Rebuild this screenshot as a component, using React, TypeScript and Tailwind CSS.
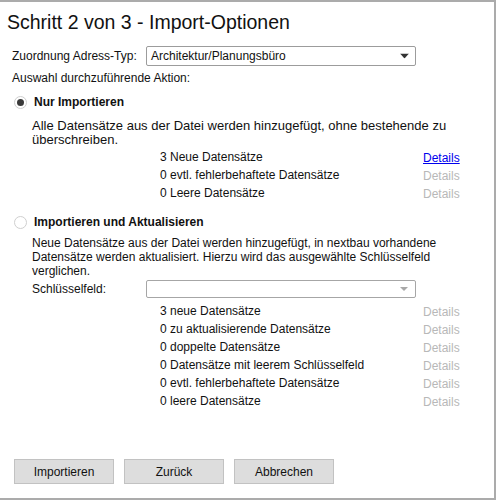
import React from "react";

type Row = { label: string; link?: boolean };

const importRows: Row[] = [
  { label: "3 Neue Datensätze", link: true },
  { label: "0 evtl. fehlerbehaftete Datensätze" },
  { label: "0 Leere Datensätze" },
];

const updateRows: Row[] = [
  { label: "3 neue Datensätze" },
  { label: "0 zu aktualisierende Datensätze" },
  { label: "0 doppelte Datensätze" },
  { label: "0 Datensätze mit leerem Schlüsselfeld" },
  { label: "0 evtl. fehlerbehaftete Datensätze" },
  { label: "0 leere Datensätze" },
];

function Radio({ checked }: { checked: boolean }) {
  return (
    <span className="flex h-[13px] w-[13px] shrink-0 items-center justify-center rounded-full border border-[#cfcfcf] bg-white">
      {checked && <span className="h-[7px] w-[7px] rounded-full bg-[#3a3a3a]" />}
    </span>
  );
}

function Caret({ muted }: { muted?: boolean }) {
  return muted ? (
    <svg width="8" height="4" viewBox="0 0 8 4" className="absolute right-[7px] top-1/2 -translate-y-1/2">
      <path d="M0 0h8L4 4z" fill="#a8a8a8" />
    </svg>
  ) : (
    <svg width="9" height="5" viewBox="0 0 9 5" className="absolute right-[6px] top-1/2 -translate-y-1/2">
      <path d="M0 0h9L4.5 5z" fill="#333" />
    </svg>
  );
}

function Select({ value, tall }: { value?: string; tall?: boolean }) {
  return (
    <div
      className={`relative flex w-[270px] items-center rounded-[2px] border bg-white pl-[4px] ${
        tall ? "h-[20px] border-[#9c9c9c]" : "h-[18px] border-[#a6a6a6]"
      }`}
    >
      <span className="leading-[14px]">{value}</span>
      <Caret muted={!value} />
    </div>
  );
}

function StatRows({ rows }: { rows: Row[] }) {
  return (
    <div className="pl-[160px]">
      {rows.map((r) => (
        <div key={r.label} className="flex h-[18px] leading-[18px]">
          <span className="w-[263px]">{r.label}</span>
          {r.link ? (
            <span className="pt-[1px] text-[#0000ee] underline">Details</span>
          ) : (
            <span className="pt-[1px] text-[#b8b8b8]">Details</span>
          )}
        </div>
      ))}
    </div>
  );
}

function Button({ children }: { children: React.ReactNode }) {
  return (
    <div className="flex h-[25px] w-[100px] items-center justify-center border border-[#c2c2c2] bg-[#dddddd]">
      {children}
    </div>
  );
}

export default function App() {
  return (
    <div
      className="flex h-[500px] w-[496px] flex-col border-t-2 border-r-2 border-b-2 border-[#ababab] bg-white text-[12px] text-[#111]"
      style={{ fontFamily: '"Liberation Sans", Arial, sans-serif' }}
    >
      <h1 className="pl-[7px] pt-[8px] text-[19.5px] leading-[24px]">Schritt 2 von 3 - Import-Optionen</h1>

      <div className="mt-[12px] flex h-[20px] items-center pl-[12px]">
        <span className="w-[134px]">Zuordnung Adress-Typ:</span>
        <Select value="Architektur/Planungsbüro" tall />
      </div>

      <div className="mt-[5px] pl-[12px] leading-[14px]">Auswahl durchzuführende Aktion:</div>

      <div className="mt-[9px] flex h-[16px] items-center pl-[14px]">
        <Radio checked />
        <span className="ml-[7px] font-bold">Nur Importieren</span>
      </div>

      <p className="mt-[9px] w-[462px] pl-[32px] text-[13px] leading-[14px]">
        Alle Datensätze aus der Datei werden hinzugefügt, ohne bestehende zu überschreiben.
      </p>

      <div className="mt-[1px]">
        <StatRows rows={importRows} />
      </div>

      <div className="mt-[12px] flex h-[16px] items-center pl-[14px]">
        <Radio checked={false} />
        <span className="ml-[7px] font-bold">Importieren und Aktualisieren</span>
      </div>

      <div className="mt-[6px] pl-[32px]">
        <p className="w-[430px] leading-[14px]">
          Neue Datensätze aus der Datei werden hinzugefügt, in nextbau vorhandene Datensätze werden aktualisiert.
          Hierzu wird das ausgewählte Schlüsselfeld verglichen.
        </p>
        <div className="mt-[2px] flex h-[18px] items-center">
          <span className="w-[114px]">Schlüsselfeld:</span>
          <Select />
        </div>
      </div>

      <div className="mt-[4px]">
        <StatRows rows={updateRows} />
      </div>

      <div className="mt-[49px] flex gap-[10px] pl-[14px]">
        <Button>Importieren</Button>
        <Button>Zurück</Button>
        <Button>Abbrechen</Button>
      </div>
    </div>
  );
}
